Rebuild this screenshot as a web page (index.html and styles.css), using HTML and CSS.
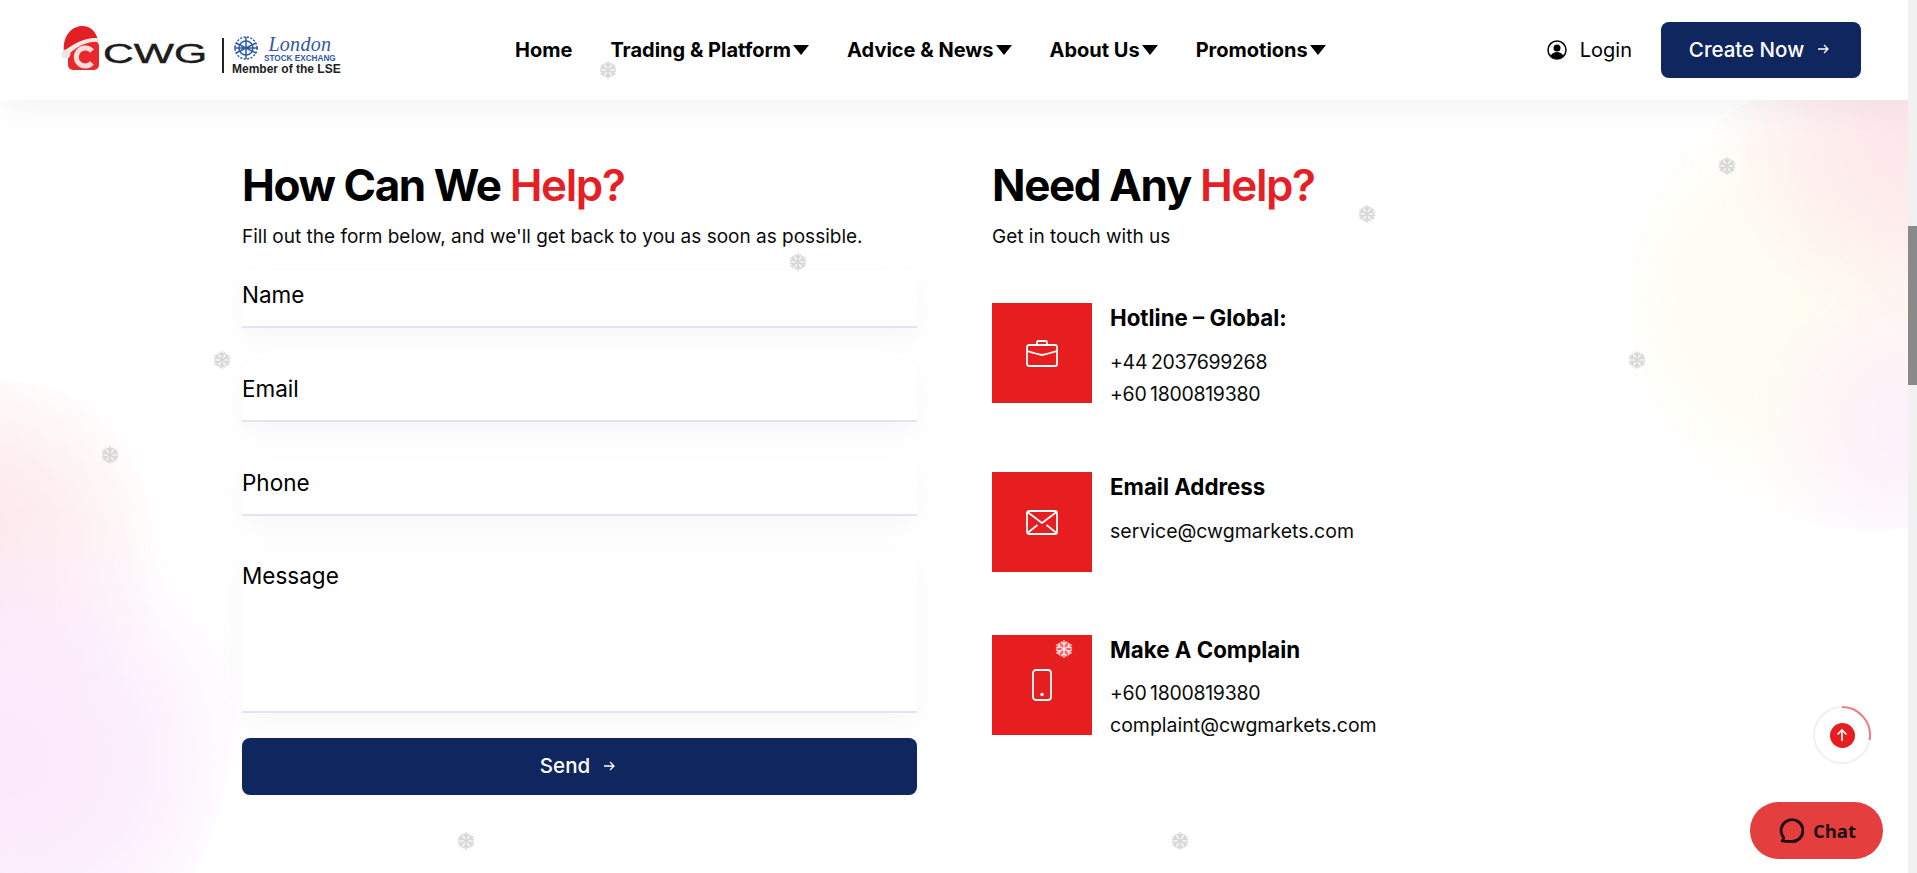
FILE: index.html
```html
<!DOCTYPE html>
<html lang="en">
<head>
    <meta charset="UTF-8">
    <meta name="viewport" content="width=device-width, initial-scale=1.0">
    <title>Contact Us - CWG Markets</title>
    <link rel="stylesheet" href="styles.css">
</head>
<body>
    <svg class="defs" width="0" height="0">
        <symbol id="flake" viewBox="0 0 24 24">
            <circle cx="12" cy="12" r="10.500" fill="currentColor" fill-opacity="0.35"/>
            <g fill="none" stroke="currentColor" stroke-width="1.900" stroke-linecap="round">
                <path d="M12 1v22M2.500 6.500l19 11M21.500 6.500l-19 11"/>
                <path d="M8.500 3l3.500 3.500L15.500 3M8.500 21l3.500-3.500 3.500 3.500"/>
                <path d="M2 10.500l4.700-1.300L5.500 4.500M22 13.500l-4.700 1.300 1.200 4.700"/>
                <path d="M22 10.500l-4.700-1.300 1.200-4.700M2 13.500l4.700 1.300-1.200 4.700"/>
            </g>
        </symbol>
    </svg>

    <div class="page">
        <div class="blob blob-left"></div>
        <div class="blob blob-right"></div>

        <header class="header">
            <a class="logo" href="#">
                <span class="logo-mark">
                    <svg width="40" height="46" viewBox="0 0 40 46">
                        <rect x="7" y="15" width="31" height="29" rx="5" fill="#e8282b"/>
                        <path d="M3 26C1 9 12 0 21 0c9 0 14 6 16 14-12-2-23 4-34 12z" fill="#e31e24"/>
                        <path d="M3 25c10-8 22-14 34-13l1 4c-11-1-21 4-30 12z" fill="#f5e6e6"/>
                        <circle cx="5" cy="28" r="4.500" fill="#eee6e6"/>
                        <path d="M31 25a9 9 0 1 0 0 12" fill="none" stroke="#f7dcdc" stroke-width="5"/>
                    </svg>
                </span>
                <span class="logo-name"><span>CWG</span></span>
                <span class="logo-rule"></span>
                <span class="logo-lse">
                    <span class="lse-top">
                        <svg width="28" height="25" viewBox="0 0 28 25">
                            <g fill="none" stroke="#2f57a6" stroke-width="1.500">
                                <circle cx="14" cy="12" r="7"/>
                                <circle cx="14" cy="12" r="11" stroke-dasharray="2 1.500"/>
                                <path d="M14 1v22M4 7l20 10M24 7L4 17M2 12h24"/>
                            </g>
                        </svg>
                        <span class="lse-words">
                            <span class="lse-london">London</span>
                            <span class="lse-stock">STOCK EXCHANG</span>
                        </span>
                    </span>
                    <span class="lse-member">Member of the LSE</span>
                </span>
            </a>

            <nav class="nav">
                <a href="#">Home</a>
                <a href="#">Trading &amp; Platform<i class="caret"></i></a>
                <a href="#">Advice &amp; News<i class="caret"></i></a>
                <a href="#">About Us<i class="caret"></i></a>
                <a href="#">Promotions<i class="caret"></i></a>
            </nav>

            <div class="header-right">
                <a class="login" href="#">
                    <svg width="20" height="20" viewBox="0 0 20 20">
                        <circle cx="10" cy="10" r="9" fill="none" stroke="#000" stroke-width="1.500"/>
                        <circle cx="10" cy="8" r="3.500" fill="#000"/>
                        <path d="M3.500 16c1.500-3 4-4 6.500-4s5 1 6.500 4c-3.500 3.500-9.500 3.500-13 0z" fill="#000"/>
                    </svg>
                    Login
                </a>
                <a class="btn btn-create" href="#">Create Now
                    <svg class="arrow" width="14" height="14" viewBox="0 0 14 14"><path d="M2 7h10M8 3l4 4-4 4" fill="none" stroke="#fff" stroke-width="1.300"/></svg>
                </a>
            </div>
        </header>

        <main class="contact">
            <section class="contact-form">
                <h2>How Can We <span>Help?</span></h2>
                <p class="lead">Fill out the form below, and we'll get back to you as soon as possible.</p>
                <form class="form">
                    <input type="text" placeholder="Name">
                    <input type="email" placeholder="Email">
                    <input type="text" placeholder="Phone">
                    <textarea placeholder="Message"></textarea>
                    <button type="button" class="btn btn-send">Send
                        <svg class="arrow" width="14" height="14" viewBox="0 0 14 14"><path d="M2 7h10M8 3l4 4-4 4" fill="none" stroke="#fff" stroke-width="1.300"/></svg>
                    </button>
                </form>
            </section>

            <section class="contact-info">
                <h2>Need Any <span>Help?</span></h2>
                <p class="lead">Get in touch with us</p>

                <div class="info-item item-hotline">
                    <div class="info-icon">
                        <svg width="32" height="27" viewBox="0 0 32 27" fill="none" stroke="#fff" stroke-width="1.800" stroke-linejoin="round">
                            <rect x="1" y="5" width="30" height="21" rx="2"/>
                            <path d="M11 5V2.500A1.500 1.500 0 0 1 12.500 1h7A1.500 1.500 0 0 1 21 2.500V5"/>
                            <path d="M1 11c5 1.500 10 3 15 4 5-1 10-2.500 15-4"/>
                        </svg>
                    </div>
                    <div class="info-text">
                        <h3>Hotline – Global:</h3>
                        <p class="first tel">+44 2037699268</p>
                        <p class="tel">+60 1800819380</p>
                    </div>
                </div>

                <div class="info-item item-email">
                    <div class="info-icon">
                        <svg width="32" height="25" viewBox="0 0 32 25" fill="none" stroke="#fff" stroke-width="1.800" stroke-linejoin="round">
                            <rect x="1" y="1" width="30" height="23" rx="2"/>
                            <path d="M1.500 2l14.500 11L30.500 2M1.500 23l10-8M30.500 23l-10-8"/>
                        </svg>
                    </div>
                    <div class="info-text">
                        <h3>Email Address</h3>
                        <p class="first">service@cwgmarkets.com</p>
                    </div>
                </div>

                <div class="info-item item-complain">
                    <div class="info-icon">
                        <svg width="20" height="32" viewBox="0 0 20 32" fill="none" stroke="#fff" stroke-width="1.800">
                            <rect x="1" y="1" width="18" height="30" rx="3"/>
                            <circle cx="10" cy="25.500" r="1.700" fill="#fff" stroke="none"/>
                        </svg>
                    </div>
                    <div class="info-text">
                        <h3>Make A Complain</h3>
                        <p class="first tel">+60 1800819380</p>
                        <p>complaint@cwgmarkets.com</p>
                    </div>
                </div>
            </section>
        </main>

        <svg class="snow s1"><use href="#flake"/></svg>
        <svg class="snow s2"><use href="#flake"/></svg>
        <svg class="snow s3"><use href="#flake"/></svg>
        <svg class="snow s4"><use href="#flake"/></svg>
        <svg class="snow s5"><use href="#flake"/></svg>
        <svg class="snow s6"><use href="#flake"/></svg>
        <svg class="snow s7"><use href="#flake"/></svg>
        <svg class="snow s8"><use href="#flake"/></svg>
        <svg class="snow s9"><use href="#flake"/></svg>
        <svg class="snow s10"><use href="#flake"/></svg>

        <a class="to-top" href="#">
            <svg class="to-top-ring" width="58" height="58" viewBox="0 0 58 58" fill="none" stroke-width="2">
                <circle cx="29" cy="29" r="28" stroke="#f1f1f1"/>
                <path d="M29 1a28 28 0 0 1 27.500 33" stroke="#ee7d80"/>
            </svg>
            <span class="to-top-dot">
                <svg width="14" height="14" viewBox="0 0 14 14"><path d="M7 13V2M2.500 6.500L7 2l4.500 4.500" fill="none" stroke="#fff" stroke-width="1.600"/></svg>
            </span>
        </a>

        <a class="chat" href="#">
            <svg width="27" height="27" viewBox="0 0 26 26">
                <path d="M5 23c1-1 1.500-2 1.300-3.300A10.500 10.500 0 1 1 13 23.500c-2 0-4 .2-8-.5z" fill="none" stroke="#1b0f10" stroke-width="2.800" stroke-linejoin="round"/>
            </svg>
            Chat
        </a>
    </div>

    <div class="scrollbar"><div class="scrollbar-thumb"></div></div>
</body>
</html>
```

FILE: styles.css
```css
* {
    margin: 0;
    padding: 0;
    box-sizing: border-box;
}

html, body {
    height: 100%;
    overflow: hidden;
}

body {
    display: flex;
    background: #fff;
    color: #000;
    font-family: Inter, "Noto Sans", sans-serif;
}

a {
    color: inherit;
    text-decoration: none;
}

.defs {
    position: absolute;
}

.page {
    position: relative;
    flex: 1;
    height: 873px;
    overflow: hidden;
    background: #fff;
}

.scrollbar {
    width: 9px;
    height: 873px;
    padding-top: 226px;
    background: #f1f1f1;
}

.scrollbar-thumb {
    height: 159px;
    background: #8a8a8a;
}

/* background blobs */
.blob {
    position: absolute;
    border-radius: 50%;
}

.blob-left {
    left: -240px;
    top: 381px;
    width: 475px;
    height: 630px;
    background:
        radial-gradient(circle at 53% 60%, #fbe9fc 0%, rgba(251, 233, 252, 0.8) 26%, rgba(252, 240, 253, 0.25) 48%, rgba(255, 255, 255, 0) 56%),
        radial-gradient(circle at 46% 26%, #fde6e9 0%, rgba(253, 232, 235, 0.75) 16%, rgba(255, 255, 255, 0) 36%);
}

.blob-right {
    left: 1630px;
    top: 70px;
    width: 480px;
    height: 460px;
    background:
        radial-gradient(circle at 62% 12%, #fde4e8 0%, rgba(253, 228, 232, 0.6) 22%, rgba(253, 232, 236, 0) 42%),
        radial-gradient(circle at 60% 78%, rgba(251, 233, 252, 0.7) 0%, rgba(251, 233, 252, 0.35) 20%, rgba(251, 234, 252, 0) 36%),
        radial-gradient(circle at 38% 50%, #fffcf2 0%, rgba(255, 252, 242, 0.85) 34%, rgba(255, 255, 255, 0) 62%);
}

/* header */
.header {
    position: relative;
    z-index: 2;
    display: flex;
    align-items: center;
    height: 100px;
    padding: 0 47px 0 61px;
    background: #fff;
    box-shadow: 0 8px 30px rgba(0, 0, 0, 0.05);
}

.logo {
    display: flex;
    align-items: center;
    width: 454px;
    height: 100%;
}

.logo-mark {
    display: flex;
    margin-top: -2px;
}

.logo-name {
    width: 104px;
    margin: 8px 0 0 2px;
    font-family: "Liberation Sans", Arial, sans-serif;
    font-size: 27px;
    font-weight: 400;
    line-height: 27px;
    color: #1c1c1c;
    -webkit-text-stroke: 0.4px #1c1c1c;
}

.logo-name span {
    display: inline-block;
    transform: scaleX(1.58);
    transform-origin: left center;
}

.logo-rule {
    width: 2px;
    height: 35px;
    margin: 11px 8px 0 15px;
    background: #222;
}

.logo-lse {
    display: flex;
    flex-direction: column;
    margin-top: 11px;
    font-family: "Liberation Sans", Arial, sans-serif;
    color: #2f57a6;
}

.lse-top {
    display: flex;
    gap: 4px;
    height: 26px;
}

.lse-words {
    display: flex;
    flex-direction: column;
    align-items: center;
}

.lse-london {
    font-family: "Liberation Serif", serif;
    font-style: italic;
    font-size: 20px;
    line-height: 17px;
    letter-spacing: 0.3px;
}

.lse-stock {
    margin-top: 2px;
    font-size: 8.200px;
    font-weight: 700;
    line-height: 8px;
    white-space: nowrap;
}

.lse-member {
    margin-top: 1px;
    font-size: 12px;
    font-weight: 700;
    line-height: 12px;
    color: #222;
    white-space: nowrap;
}

.nav {
    display: flex;
    gap: 38px;
    font-size: 20px;
    font-weight: 700;
}

.nav a {
    display: flex;
    align-items: center;
    white-space: nowrap;
}

.caret {
    width: 0;
    height: 0;
    margin-left: 2px;
    border-left: 8px solid transparent;
    border-right: 8px solid transparent;
    border-top: 10px solid #000;
}

.header-right {
    display: flex;
    align-items: center;
    gap: 29px;
    margin-left: auto;
}

.login {
    display: flex;
    align-items: center;
    gap: 13px;
    font-size: 20px;
    font-weight: 400;
}

.btn {
    display: flex;
    align-items: center;
    justify-content: center;
    gap: 12px;
    padding: 0 3px 2px 0;
    background: #0f275e;
    color: #fff;
    border: none;
    border-radius: 8px;
    font-family: inherit;
    font-size: 20.500px;
    font-weight: 500;
}

.btn-create {
    width: 200px;
    height: 56px;
}

/* contact section */
.contact {
    position: relative;
    z-index: 1;
    display: grid;
    grid-template-columns: 675px 1fr;
    column-gap: 75px;
    padding: 58px 0 0 242px;
}

h2 {
    font-size: 44px;
    font-weight: 700;
    line-height: 54px;
    letter-spacing: -1.400px;
}

h2 span {
    font-weight: 600;
    color: #e61e25;
}

.lead {
    margin-top: 12px;
    font-size: 19px;
    font-weight: 400;
    line-height: 26px;
    color: #0b0b0b;
    white-space: nowrap;
}

.form {
    display: flex;
    flex-direction: column;
    margin-top: 20px;
}

.form input,
.form textarea {
    display: block;
    width: 100%;
    height: 58px;
    margin-bottom: 36px;
    padding: 0;
    background: #fff;
    border: none;
    border-bottom: 2px solid #e4e2f3;
    box-shadow: 0 10px 30px rgba(0, 0, 0, 0.035);
    font-family: inherit;
    font-size: 22.500px;
    font-weight: 400;
    outline: none;
    resize: none;
}

.form input {
    padding-bottom: 7px;
}

.form textarea {
    height: 161px;
    margin-bottom: 25px;
    padding-top: 11px;
    line-height: 26px;
}

.form input::placeholder,
.form textarea::placeholder {
    color: #000;
    opacity: 1;
}

.btn-send {
    width: 100%;
    height: 57px;
}

.info-item {
    display: flex;
    gap: 18px;
    height: 100px;
}

.item-hotline {
    margin-top: 53px;
}

.item-email {
    margin-top: 69px;
}

.item-complain {
    margin-top: 63px;
}

.info-icon {
    display: flex;
    flex: none;
    align-items: center;
    justify-content: center;
    width: 100px;
    height: 100px;
    background: #e61e1f;
}

.info-text h3 {
    font-size: 22.300px;
    font-weight: 700;
    line-height: 30px;
}

.info-text p {
    font-size: 19.500px;
    font-weight: 400;
    line-height: 32px;
    color: #0b0b0b;
}

.info-text p.tel {
    letter-spacing: -0.300px;
    word-spacing: -1.500px;
}

.info-text p.first {
    margin-top: 13px;
}

.item-complain .info-text p.first {
    margin-top: 12px;
}

/* snow */
.snow {
    position: absolute;
    z-index: 3;
    width: 18px;
    height: 18px;
    color: #d6d6d6;
}

.s1 { left: 599px; top: 61px; }
.s2 { left: 1718px; top: 157px; }
.s3 { left: 1358px; top: 205px; }
.s4 { left: 789px; top: 253px; }
.s5 { left: 213px; top: 351px; }
.s6 { left: 1628px; top: 351px; }
.s7 { left: 101px; top: 446px; }
.s8 { left: 457px; top: 832px; }
.s9 { left: 1171px; top: 832px; }
.s10 { left: 1055px; top: 640px; color: #f5dede; }

/* floating buttons */
.to-top {
    position: absolute;
    z-index: 4;
    left: 1813px;
    top: 706px;
    display: flex;
    align-items: center;
    justify-content: center;
    width: 58px;
    height: 58px;
    border-radius: 50%;
    background: #fff;
}

.to-top-ring {
    position: absolute;
    left: 0;
    top: 0;
}

.to-top-dot {
    display: flex;
    align-items: center;
    justify-content: center;
    width: 25px;
    height: 25px;
    border-radius: 50%;
    background: #e61e1f;
}

.chat {
    position: absolute;
    z-index: 4;
    left: 1750px;
    top: 802px;
    display: flex;
    align-items: center;
    justify-content: center;
    gap: 9px;
    width: 133px;
    height: 57px;
    border-radius: 29px;
    background: #e53e3e;
    color: #1b0f10;
    font-family: "Open Sans", sans-serif;
    font-size: 18.500px;
    font-weight: 700;
}
```
